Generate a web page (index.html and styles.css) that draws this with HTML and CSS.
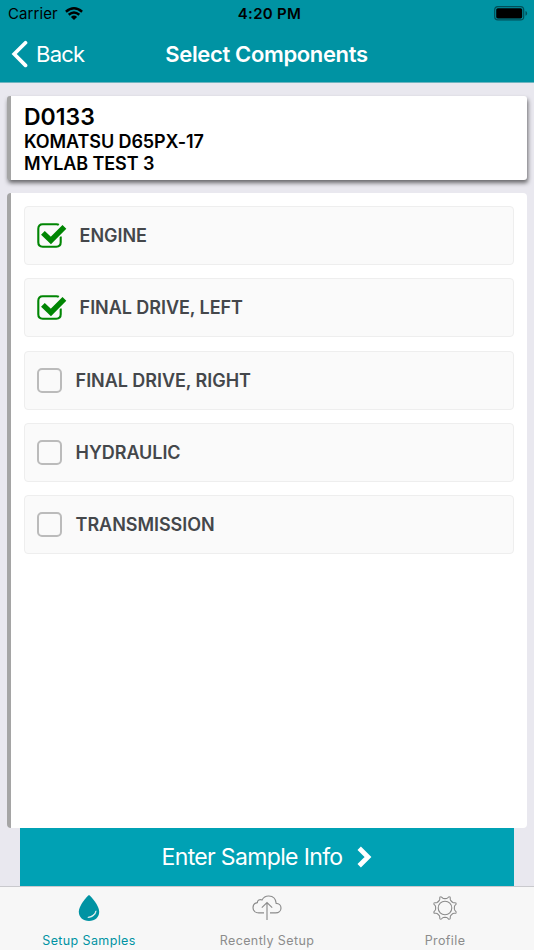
FILE: index.html
```html
<!DOCTYPE html>
<html lang="en">
<head>
<meta charset="utf-8">
<title>Select Components</title>
<link rel="stylesheet" href="styles.css">
</head>
<body>
<header class="header">
  <div class="status">
    <div class="carrier"><span>Carrier</span>
      <svg width="18" height="13" viewBox="0 0 18 13" fill="none" stroke="#000" stroke-width="2.5"><path d="M.9 4.7Q9-2.1 17.1 4.7M3.7 7.8Q9 3.3 14.3 7.8"/><path d="M5.9 10Q9 7.2 12.1 10L9 13z" fill="#000" stroke="none"/></svg>
    </div>
    <div class="time">4:20 PM</div>
    <svg class="battery" width="34" height="15" viewBox="0 0 34 15"><rect x=".7" y=".7" width="29" height="13.2" rx="3.2" fill="none" stroke="#004f58" stroke-width="1.2"/><rect x="2.2" y="2.2" width="26" height="10.2" rx="1.6"/><path d="M31.5 5q1.6.5 1.6 2.4t-1.6 2.4z" fill="#004f58"/></svg>
  </div>
  <div class="navbar">
    <div class="back"><svg width="18" height="28" viewBox="0 0 18 28" fill="none" stroke="#fff" stroke-width="3.7" stroke-linecap="round" stroke-linejoin="miter"><path d="M14.5 2.8 3.2 14l11.3 11.4"/></svg><span>Back</span></div>
    <h1 class="title">Select Components</h1>
  </div>
</header>
<main class="content">
  <section class="card">
    <div class="unit">D0133</div>
    <div class="detail">KOMATSU D65PX-17</div>
    <div class="detail">MYLAB TEST 3</div>
  </section>
  <section class="panel">
    <div class="row"><svg class="check" width="30" height="26" viewBox="0 0 30 26" fill="none" stroke="#008503"><path d="M21.8 1.9Q21 1.3 19.5 1.3H5.7Q1.3 1.3 1.3 5.7v13.6q0 4.4 4.4 4.4h13.6q4.4 0 4.4-4.4V13.5" stroke-width="2.1"/><path d="M6 10l7.9 7.4L27.7 3.6" stroke="#fafafa" stroke-width="7.4"/><path d="M5.9 9.9l8 7.5L27.4 3.9" stroke-width="5.4"/></svg><span>ENGINE</span></div>
    <div class="row"><svg class="check" width="30" height="26" viewBox="0 0 30 26" fill="none" stroke="#008503"><path d="M21.8 1.9Q21 1.3 19.5 1.3H5.7Q1.3 1.3 1.3 5.7v13.6q0 4.4 4.4 4.4h13.6q4.4 0 4.4-4.4V13.5" stroke-width="2.1"/><path d="M6 10l7.9 7.4L27.7 3.6" stroke="#fafafa" stroke-width="7.4"/><path d="M5.9 9.9l8 7.5L27.4 3.9" stroke-width="5.4"/></svg><span>FINAL DRIVE, LEFT</span></div>
    <div class="row"><i class="box"></i><span>FINAL DRIVE, RIGHT</span></div>
    <div class="row"><i class="box"></i><span>HYDRAULIC</span></div>
    <div class="row"><i class="box"></i><span>TRANSMISSION</span></div>
  </section>
  <div class="action"><span>Enter Sample Info</span><svg width="15" height="22" viewBox="0 0 15 22" fill="none" stroke="#fff" stroke-width="4.8"><path d="M2.2 2.2 11 11l-8.8 8.8"/></svg></div>
</main>
<nav class="tabs">
  <div class="tab active">
    <svg width="28" height="28" viewBox="-14 -14 28 28"><path d="M0-13C2-11.8 10.2-2.5 10.2 3.8 10.2 9.2 6 13 0 13S-10.2 9.2-10.2 3.8C-10.2-2.5-2-11.8 0-13z" fill="#0093a3"/><path d="M7 2.8C6.8 6.8 3.7 9.5-1.2 9.4 3 8.4 6 6.4 7 2.8z" fill="#f7f7f7" stroke="#f7f7f7" stroke-width=".7"/></svg>
    <span>Setup Samples</span>
  </div>
  <div class="tab">
    <svg width="30" height="28" viewBox="0 0 30 28" fill="none" stroke="#8c8c8c" stroke-width="1.15"><path d="M12 18.9H6.8C3.3 18.9 1 16.6 1 13.7c0-2.8 2-4.8 4.4-5.1C5.2 6.4 7.8 5 10 6c1.4-2.6 3.9-4.1 6.8-4 4.4.2 7.1 3.2 7.4 7.4 2.7.1 4.8 2 4.8 4.6 0 2.9-2.3 4.9-5.4 4.9H18M15 26V8.8M9.8 13.7 15 8.5l5.2 5.2"/></svg>
    <span>Recently Setup</span>
  </div>
  <div class="tab">
    <svg width="28" height="28" viewBox="-14 -14 28 28" fill="none" stroke="#8c8c8c" stroke-width="1.1"><defs><path id="tooth" d="M-4.65-11.25C-3.2-11.6-3.2-9.9-1.7-9.5Q0-9.2 1.7-9.5C3.2-9.9 3.2-11.6 4.67-11.24"/></defs><circle r="6.8"/><use href="#tooth"/><use href="#tooth" transform="rotate(45)"/><use href="#tooth" transform="rotate(90)"/><use href="#tooth" transform="rotate(135)"/><use href="#tooth" transform="rotate(180)"/><use href="#tooth" transform="rotate(225)"/><use href="#tooth" transform="rotate(270)"/><use href="#tooth" transform="rotate(315)"/></svg>
    <span>Profile</span>
  </div>
</nav>
</body>
</html>
```
FILE: styles.css
```css
* { box-sizing: border-box; }
body { margin: 0; width: 534px; height: 950px; display: flex; flex-direction: column; overflow: hidden; background: #e9e8ef; font-family: Inter, "Liberation Sans", sans-serif; color: #000; white-space: nowrap; }
svg { display: block; flex: none; }
.header { height: 83px; flex: none; background: #0093a3; border-bottom: 1px solid #6fb5c0; }
.status { height: 27px; display: grid; grid-template-columns: 1fr auto 1fr; align-items: center; padding: 0 6px 0 8px; }
.carrier { display: flex; align-items: center; gap: 7px; font-size: 15px; letter-spacing: .1px; }
.time { padding-left: 3px; font-size: 15px; font-weight: 600; letter-spacing: .3px; }
.battery { justify-self: end; }
.navbar { height: 54px; display: grid; grid-template-columns: 1fr auto 1fr; align-items: center; padding: 0 12px 0 11px; color: #fff; }
.back { display: flex; align-items: center; gap: 7px; font-size: 22px; letter-spacing: -.75px; }
.title { margin: 0; font-size: 22px; font-weight: 600; letter-spacing: -.35px; }
.content { flex: 1; display: flex; flex-direction: column; padding: 13px 7px 0; }
.card { height: 84px; flex: none; padding: 7px 13px; background: #fff; border-left: 4px solid #a5a5a5; border-radius: 3px; box-shadow: 1px 3px 4px rgba(0,0,0,.55); }
.unit { font-size: 23px; line-height: 28px; font-weight: 600; letter-spacing: 0; }
.detail { font-size: 18px; line-height: 22px; font-weight: 600; letter-spacing: -.1px; }
.panel { height: 635px; flex: none; margin-top: 13px; padding: 13.2px 12.6px 0; background: #fff; border-left: 4px solid #a5a5a5; border-radius: 4px; display: flex; flex-direction: column; gap: 13.25px; }
.row { height: 59px; flex: none; display: flex; align-items: center; padding-left: 12.5px; background: #fafafa; border: 1.5px solid #eee; border-radius: 4px; color: #44474b; font-size: 18px; font-weight: 600; letter-spacing: -.05px; }
.check { margin-right: 12.5px; }
.box { width: 25px; height: 25px; margin-right: 13.5px; border: 2px solid #bbb; border-radius: 5px; }
.action { height: 58px; flex: none; margin: 0 13px; display: flex; align-items: center; justify-content: center; gap: 15px; background: #00a1b4; color: #fff; font-size: 23px; letter-spacing: -.65px; }
.tabs { height: 64px; flex: none; display: grid; grid-template-columns: repeat(3, 178px); background: #f7f7f7; border-top: 1px solid #c9c9cd; }
.tab { display: flex; flex-direction: column; align-items: center; padding-top: 7px; font-size: 12.5px; line-height: 16px; letter-spacing: .38px; color: #8c8c8c; }
.tab span { margin-top: 11px; }
.active { color: #0093a3; }
```
